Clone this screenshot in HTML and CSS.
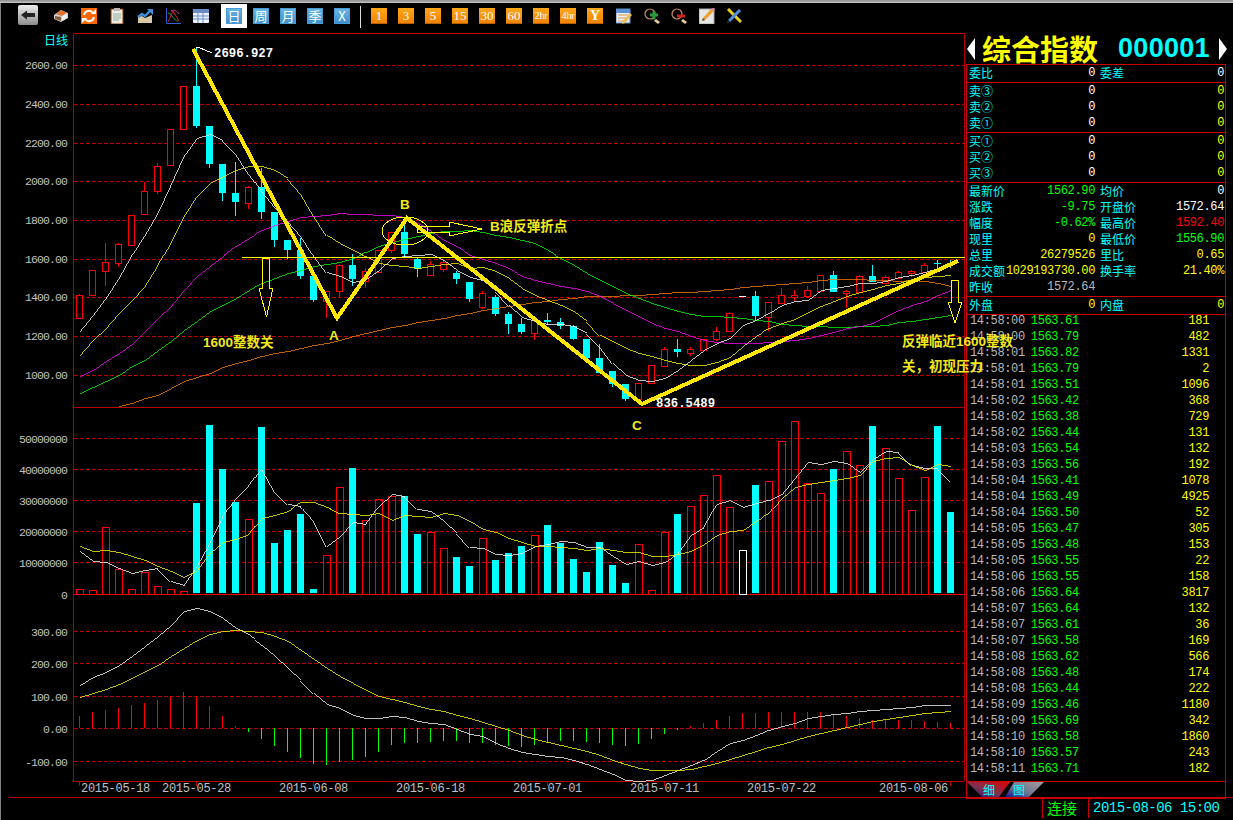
FILE: index.html
```html
<!DOCTYPE html>
<html lang="zh-CN">
<head>
<meta charset="utf-8">
<title>综合指数 000001</title>
<link rel="stylesheet" href="styles.css">
</head>
<body>
<div class="app">
  <div class="topstrip"></div>
  <nav class="toolbar">
    <svg class="icon back" viewBox="0 0 20 20"><defs><linearGradient id="gb" x1="0" y1="0" x2="0" y2="1"><stop offset="0" stop-color="#eee"/><stop offset="1" stop-color="#8c8c8c"/></linearGradient></defs><rect width="20" height="20" rx="2" fill="url(#gb)"/><path d="M3 10l6-4.500V8h8v4H9v2.500z" fill="#222"/></svg>
    <div class="group g-main">
      <svg class="icon" viewBox="0 0 16 16"><path d="M1 7l7-5 7 3v5l-7 4-7-3z" fill="#cfcfcf"/><path d="M3 6l5-4 6 3-5 3z" fill="#e8702a"/><path d="M9 8l5-3v5l-5 3z" fill="#f0f0f0"/><path d="M2 8l6 1v4l-6-2z" fill="#8a5a3a"/></svg>
      <svg class="icon" viewBox="0 0 16 16"><rect width="16" height="16" fill="#f60"/><path d="M3 7a5 5 0 0 1 9-2M13 9a5 5 0 0 1-9 2" fill="none" stroke="#fff" stroke-width="2"/><path d="M10 6h5V1zM6 10H1v5z" fill="#fff"/></svg>
      <svg class="icon" viewBox="0 0 16 16"><rect x="2" y="1" width="12" height="15" fill="#f2ece0" stroke="#7a3b10"/><rect x="5" y="0" width="6" height="3" fill="#b9b9b9"/><path d="M4 6h8M4 8h8M4 10h8M4 12h6" stroke="#8fb0a8"/></svg>
      <svg class="icon" viewBox="0 0 16 16"><path d="M1 15V9l4-1 3 2 7-3v8z" fill="#d8c8a8"/><path d="M1 9l4-3 3 2 5-5" fill="none" stroke="#3c8fd8" stroke-width="2.4"/><path d="M10 1h6v6z" fill="#3c8fd8"/></svg>
      <svg class="icon" viewBox="0 0 16 16"><path d="M1.500 0v15.500H16" fill="none" stroke="#2f5fd0"/><path d="M3 14L8 3l6 10" fill="none" stroke="#d02020"/><path d="M3 5c3 0 6 8 10 8" fill="none" stroke="#20a040"/><path d="M6 3c3-2 6 0 8 3" fill="none" stroke="#d040a0"/></svg>
      <svg class="icon" viewBox="0 0 16 16"><rect y="1" width="16" height="14" rx="1" fill="#eef2fa"/><rect y="1" width="16" height="4" fill="#6a8cc8"/><path d="M0 8h16M0 11h16M5 5v10M10 5v10" stroke="#6a8cc8"/></svg>
    </div>
    <div class="group g-period">
      <div class="btn blue active">日</div>
      <div class="btn blue">周</div>
      <div class="btn blue">月</div>
      <div class="btn blue">季</div>
      <div class="btn blue">X</div>
    </div>
    <div class="sep"></div>
    <div class="group g-period">
      <div class="btn orange">1</div>
      <div class="btn orange">3</div>
      <div class="btn orange">5</div>
      <div class="btn orange">15</div>
      <div class="btn orange">30</div>
      <div class="btn orange">60</div>
      <div class="btn orange small">2hr</div>
      <div class="btn orange small">4hr</div>
      <div class="btn orange strong">Y</div>
    </div>
    <div class="group g-tools">
      <svg class="icon" viewBox="0 0 16 16"><rect y="1" width="14" height="14" fill="#e8f0fa" stroke="#6a8cc8"/><rect y="1" width="14" height="4" fill="#5a90d8"/><path d="M2 7h10M2 10h10M2 13h6" stroke="#e09040"/><path d="M7 13l7-8 2 2-7 8-3 1z" fill="#e8c050"/></svg>
      <svg class="icon" viewBox="0 0 16 16"><circle cx="6" cy="6" r="5" fill="none" stroke="#c89060" stroke-width="1.200"/><path d="M10 13l2-2 4 3-2 2z" fill="#e8c8a0"/><path d="M6 7h8M10 3.500v8" stroke="#2a9a3a" stroke-width="3"/></svg>
      <svg class="icon" viewBox="0 0 16 16"><circle cx="6" cy="6" r="5" fill="none" stroke="#c89060" stroke-width="1.200"/><path d="M10 13l2-2 4 3-2 2z" fill="#e8c8a0"/><path d="M6 8h8" stroke="#d02020" stroke-width="3"/></svg>
      <svg class="icon" viewBox="0 0 16 16"><rect y="1" width="15" height="15" fill="#e6e6e6" stroke="#aaa"/><path d="M3 13l1-3 8-9 3 2-9 9z" fill="#e8a030"/><path d="M3 13l1-3 2 2z" fill="#553"/><path d="M12 1l3 2 1-2-2-1z" fill="#e080c0"/></svg>
      <svg class="icon" viewBox="0 0 16 16"><path d="M2 1l13 13" stroke="#e8d020" stroke-width="3"/><path d="M14 2L3 13" stroke="#4a90e0" stroke-width="3"/><path d="M1 15l2-2" stroke="#223" stroke-width="2"/></svg>
    </div>
  </nav>

  <main class="workspace">
    <svg class="chart" viewBox="0 33 966 764" width="966" height="764" shape-rendering="crispEdges">
      <g class="grid">
        <path d="M74 65.500H964M74 104.500H964M74 143.500H964M74 181.500H964M74 220.500H964M74 259.500H964M74 297.500H964M74 336.500H964M74 375.500H964"/>
        <path d="M74 438.500H964M74 469.500H964M74 500.500H964M74 531.500H964M74 562.500H964"/>
        <path d="M74 631.500H964M74 663.500H964M74 696.500H964M74 728.500H964M74 761.500H964"/>
      </g>
      <path class="frame" d="M73.500 33V781.500M73 33.500H964.500V781M73 407.500H964M73 781.500H964"/>
      <path class="frame" d="M79.500 781v5M196.500 781v5M313.500 781v5M430.500 781v5M547.500 781v5M664.500 781v5M781.500 781v5M950.500 781v5"/>
      <path class="zero" d="M73 594.500H964"/>

      <g id="volume"></g>
      <g id="macd"></g>
      <g id="candles"></g>
      <g id="lines"></g>

      <path class="trend" d="M193 49L337 318L407 218L642 404L958 261"/>
      <path class="mark" d="M242 257.500H965"/>
      <polygon class="mark" points="262.500,258.500 269.500,258.500 269.500,288 273,288 266.500,317 259,288 262.500,288"/>
      <polygon class="mark" points="951.500,280.500 958.500,280.500 958.500,302 962,302 955,323 948,302 951.500,302"/>
      <ellipse class="mark" cx="405" cy="231" rx="23" ry="14"/>
      <polygon class="mark" points="417,226 449,226 449,222 482,229 449,236 449,232 417,232"/>
      <path class="tipline" d="M196 47.500h3L212 53"/>

      <text class="label-tag" x="44" y="45">日线</text>
      <g class="axis">
        <text x="67" y="69">2600.00</text><text x="67" y="108">2400.00</text><text x="67" y="147">2200.00</text>
        <text x="67" y="185">2000.00</text><text x="67" y="224">1800.00</text><text x="67" y="263">1600.00</text>
        <text x="67" y="301">1400.00</text><text x="67" y="340">1200.00</text><text x="67" y="379">1000.00</text>
        <text x="67" y="443">50000000</text><text x="67" y="474">40000000</text><text x="67" y="505">30000000</text>
        <text x="67" y="536">20000000</text><text x="67" y="567">10000000</text><text x="67" y="599">0</text>
        <text x="67" y="636">300.00</text><text x="67" y="668">200.00</text><text x="67" y="701">100.00</text>
        <text x="67" y="733">0.00</text><text x="67" y="766">-100.00</text>
      </g>
      <g class="dates">
        <text x="81" y="792">2015-05-18</text><text x="162" y="792">2015-05-28</text><text x="279" y="792">2015-06-08</text>
        <text x="396" y="792">2015-06-18</text><text x="513" y="792">2015-07-01</text><text x="630" y="792">2015-07-11</text>
        <text x="747" y="792">2015-07-22</text><text x="879" y="792">2015-08-06</text>
      </g>
      <text class="peak" x="214" y="57">2696.927</text>
      <text class="peak" x="656" y="407">836.5489</text>
      <g class="note">
        <text x="203" y="347">1600整数关</text>
        <text x="329" y="340">A</text>
        <text x="400" y="209">B</text>
        <text x="632" y="430">C</text>
        <text x="490" y="231">B浪反弹折点</text>
        <text x="902" y="346">反弹临近1600整数</text>
        <text x="902" y="371">关，初现压力</text>
      </g>
    </svg>

    <aside class="panel">
      <header class="quote-head">
        <span class="tri tri-left"></span>
        <span class="quote-name">综合指数</span>
        <span class="quote-code">000001</span>
        <span class="tri tri-right"></span>
      </header>
      <div class="book">
        <section class="sec">
          <div class="row"><div class="half"><span class="lbl">委比</span><span class="wht">0</span></div><div class="half two"><span class="lbl">委差</span><span class="wht">0</span></div></div>
        </section>
        <section class="sec">
          <div class="row"><div class="half"><span class="lbl">卖③</span><span class="wht">0</span></div><div class="half two"><span></span><span class="yel">0</span></div></div>
          <div class="row"><div class="half"><span class="lbl">卖②</span><span class="wht">0</span></div><div class="half two"><span></span><span class="yel">0</span></div></div>
          <div class="row"><div class="half"><span class="lbl">卖①</span><span class="wht">0</span></div><div class="half two"><span></span><span class="yel">0</span></div></div>
        </section>
        <section class="sec">
          <div class="row"><div class="half"><span class="lbl">买①</span><span class="wht">0</span></div><div class="half two"><span></span><span class="yel">0</span></div></div>
          <div class="row"><div class="half"><span class="lbl">买②</span><span class="wht">0</span></div><div class="half two"><span></span><span class="yel">0</span></div></div>
          <div class="row"><div class="half"><span class="lbl">买③</span><span class="wht">0</span></div><div class="half two"><span></span><span class="yel">0</span></div></div>
        </section>
        <section class="sec">
          <div class="row"><div class="half"><span class="lbl">最新价</span><span class="grn">1562.90</span></div><div class="half two"><span class="lbl">均价</span><span class="wht">0</span></div></div>
          <div class="row"><div class="half"><span class="lbl">涨跌</span><span class="grn">-9.75</span></div><div class="half two"><span class="lbl">开盘价</span><span class="wht">1572.64</span></div></div>
          <div class="row"><div class="half"><span class="lbl">幅度</span><span class="grn">-0.62%</span></div><div class="half two"><span class="lbl">最高价</span><span class="red">1592.40</span></div></div>
          <div class="row"><div class="half"><span class="lbl">现里</span><span class="yel">0</span></div><div class="half two"><span class="lbl">最低价</span><span class="grn">1556.90</span></div></div>
          <div class="row"><div class="half"><span class="lbl">总里</span><span class="yel">26279526</span></div><div class="half two"><span class="lbl">里比</span><span class="yel">0.65</span></div></div>
          <div class="row"><div class="half"><span class="lbl">成交额</span><span class="yel">1029193730.00</span></div><div class="half two"><span class="lbl">换手率</span><span class="yel">21.40%</span></div></div>
          <div class="row"><div class="half"><span class="lbl">昨收</span><span class="gry">1572.64</span></div><div class="half two"></div></div>
        </section>
        <section class="sec">
          <div class="row"><div class="half"><span class="lbl">外盘</span><span class="yel">0</span></div><div class="half two"><span class="lbl">内盘</span><span class="yel">0</span></div></div>
        </section>
        <section class="sec ticks">
          <div class="tick"><span class="gry">14:58:00</span><span class="grn">1563.61</span><span class="vol">181</span></div>
          <div class="tick"><span class="gry">14:58:00</span><span class="grn">1563.79</span><span class="vol">482</span></div>
          <div class="tick"><span class="gry">14:58:01</span><span class="grn">1563.82</span><span class="vol">1331</span></div>
          <div class="tick"><span class="gry">14:58:01</span><span class="grn">1563.79</span><span class="vol">2</span></div>
          <div class="tick"><span class="gry">14:58:01</span><span class="grn">1563.51</span><span class="vol">1096</span></div>
          <div class="tick"><span class="gry">14:58:02</span><span class="grn">1563.42</span><span class="vol">368</span></div>
          <div class="tick"><span class="gry">14:58:02</span><span class="grn">1563.38</span><span class="vol">729</span></div>
          <div class="tick"><span class="gry">14:58:02</span><span class="grn">1563.44</span><span class="vol">131</span></div>
          <div class="tick"><span class="gry">14:58:03</span><span class="grn">1563.54</span><span class="vol">132</span></div>
          <div class="tick"><span class="gry">14:58:03</span><span class="grn">1563.56</span><span class="vol">192</span></div>
          <div class="tick"><span class="gry">14:58:04</span><span class="grn">1563.41</span><span class="vol">1078</span></div>
          <div class="tick"><span class="gry">14:58:04</span><span class="grn">1563.49</span><span class="vol">4925</span></div>
          <div class="tick"><span class="gry">14:58:04</span><span class="grn">1563.50</span><span class="vol">52</span></div>
          <div class="tick"><span class="gry">14:58:05</span><span class="grn">1563.47</span><span class="vol">305</span></div>
          <div class="tick"><span class="gry">14:58:05</span><span class="grn">1563.48</span><span class="vol">153</span></div>
          <div class="tick"><span class="gry">14:58:05</span><span class="grn">1563.55</span><span class="vol">22</span></div>
          <div class="tick"><span class="gry">14:58:06</span><span class="grn">1563.55</span><span class="vol">158</span></div>
          <div class="tick"><span class="gry">14:58:06</span><span class="grn">1563.64</span><span class="vol">3817</span></div>
          <div class="tick"><span class="gry">14:58:07</span><span class="grn">1563.64</span><span class="vol">132</span></div>
          <div class="tick"><span class="gry">14:58:07</span><span class="grn">1563.61</span><span class="vol">36</span></div>
          <div class="tick"><span class="gry">14:58:07</span><span class="grn">1563.58</span><span class="vol">169</span></div>
          <div class="tick"><span class="gry">14:58:08</span><span class="grn">1563.62</span><span class="vol">566</span></div>
          <div class="tick"><span class="gry">14:58:08</span><span class="grn">1563.48</span><span class="vol">174</span></div>
          <div class="tick"><span class="gry">14:58:08</span><span class="grn">1563.44</span><span class="vol">222</span></div>
          <div class="tick"><span class="gry">14:58:09</span><span class="grn">1563.46</span><span class="vol">1180</span></div>
          <div class="tick"><span class="gry">14:58:09</span><span class="grn">1563.69</span><span class="vol">342</span></div>
          <div class="tick"><span class="gry">14:58:10</span><span class="grn">1563.58</span><span class="vol">1860</span></div>
          <div class="tick"><span class="gry">14:58:10</span><span class="grn">1563.57</span><span class="vol">243</span></div>
          <div class="tick"><span class="gry">14:58:11</span><span class="grn">1563.71</span><span class="vol">182</span></div>
        </section>
        <div class="tabs">
          <svg class="tabs-art" viewBox="0 0 80 15" width="80" height="15">
            <defs>
              <linearGradient id="t1" x1="1" y1="0" x2="0" y2="1"><stop offset="0" stop-color="#e00000"/><stop offset=".55" stop-color="#803050"/><stop offset="1" stop-color="#101080"/></linearGradient>
              <linearGradient id="t2" x1="1" y1="0" x2="0" y2="1"><stop offset="0" stop-color="#a0a0a0"/><stop offset=".6" stop-color="#707090"/><stop offset="1" stop-color="#101090"/></linearGradient>
            </defs>
            <polygon points="0,0 43,0 32,15 15,15" fill="url(#t1)"/>
            <polygon points="38,15 47,0 77,0 62,15" fill="url(#t2)"/>
            <text class="tab-text" x="16" y="13">细</text>
            <text class="tab-text" x="46" y="13">图</text>
          </svg>
        </div>
      </div>
    </aside>
  </main>

  <footer class="status">
    <span class="conn">连接</span>
    <span class="clock">2015-08-06 15:00</span>
  </footer>
</div>
<script src="chart.js"></script>
</body>
</html>
```

FILE: styles.css
```css
* { box-sizing: border-box; }
html, body { margin: 0; padding: 0; height: 100%; background: #000; overflow: hidden; }
.app {
  width: 1233px; height: 820px; background: #000;
  box-shadow: inset 1px 0 0 #808080;
  font-family: "Liberation Mono", "Noto Sans CJK SC", monospace;
}
.topstrip { height: 3px; background: linear-gradient(#8a8a8a, #c8c8c8); }

.toolbar { height: 30px; display: flex; align-items: flex-start; padding: 5px 0 0 18px; }
.icon { width: 16px; height: 16px; display: block; flex: none; }
.back { width: 20px; height: 20px; margin-top: -3px; }
.group { display: flex; }
.g-main { gap: 12px; margin-left: 15px; }
.g-period { gap: 11px; margin-left: 17px; }
.g-tools { gap: 11.500px; margin-left: 13px; }
.sep { width: 1px; height: 22px; margin: -2px 0 0 10px; background: #ddd; }
.sep + .g-period { margin-left: 10px; }
.btn {
  width: 16px; height: 16px; display: flex; align-items: center; justify-content: center;
  color: #fff; font-size: 13px; line-height: 16px; font-family: "Noto Sans CJK SC", sans-serif;
}
.blue { background: linear-gradient(#6ab8e8, #3a8ecc); box-shadow: inset 0 0 0 1px #4a9ad4; }
.blue.active { box-shadow: inset 0 0 0 1px #4a9ad4, 0 0 0 4px #fff, -1px 0 0 4px #fff, 1px 0 0 4px #fff; }
.orange {
  background: linear-gradient(#ffa81a, #f08000); box-shadow: inset 0 -1px 0 #b86000;
  font-family: "Liberation Serif", serif; font-size: 13px;
}
.small { font-size: 10.500px; letter-spacing: -.4px; }
.strong { font-weight: 700; font-size: 14px; }

.workspace { display: flex; height: 764px; }
.chart { display: block; flex: none; overflow: visible; z-index: 1; }
.grid path { fill: none; stroke: #b80000; stroke-dasharray: 4 2; }
.frame { fill: none; stroke: #b00000; }
.zero { fill: none; stroke: #f00000; }
.trend { fill: none; stroke: #ffe600; stroke-width: 4; stroke-linejoin: miter; }
.mark { fill: none; stroke: #ff0; }
.tipline { fill: none; stroke: #fff; }
.label-tag { font: 12px "Noto Sans CJK SC", sans-serif; fill: #00ffff; }
.axis text { font: 11.500px "Liberation Mono", monospace; letter-spacing: -.9px; fill: #c0c0c0; text-anchor: end; }
.dates text { font: 12px "Liberation Mono", monospace; letter-spacing: -.3px; fill: #c0c0c0; }
.peak { font: 700 12.300px "Liberation Mono", monospace; fill: #fff; }
.note text { font: 700 13.500px "Liberation Sans", "Noto Sans CJK SC", sans-serif; fill: #f0e81c; }

.ln { fill: none; stroke-width: .75; }
.ln-white { stroke: #fff; }
.ln-yellow { stroke: #ff0; }
.ln-magenta { stroke: #f0f; }
.ln-green { stroke: #0f0; }
.ln-orange { stroke: #ff8000; }
.up { fill: #000; stroke: #f00; }
.up-hollow { fill: none; stroke: #f00; }
.flat { fill: #000; stroke: #fff; }
.down { fill: #0ff; stroke: none; }
.wick-up { stroke: #f00; fill: none; }
.wick-down { stroke: #0ff; fill: none; }
.wick-flat { stroke: #fff; fill: none; }
.stem-up { stroke: #f00; fill: none; }
.stem-down { stroke: #0f0; fill: none; }

.panel { width: 260px; flex: none; display: flex; flex-direction: column; }
.quote-head { height: 31px; display: flex; align-items: center; padding-left: 1px; }
.tri { width: 0; height: 0; border-style: solid; border-color: transparent; flex: none; }
.tri-left { border-width: 11px 8px 11px 0; border-right-color: #fff; }
.tri-right { border-width: 11px 0 11px 8px; border-left-color: #fff; margin-left: 9px; }
.quote-name { margin-left: 7px; font: 700 29px/31px "Noto Sans CJK SC", sans-serif; color: #ff0; white-space: nowrap; }
.quote-code { margin-left: 20px; font: 700 27px/31px "Liberation Sans", sans-serif; letter-spacing: .3px; color: #0ff; }

.book {
  flex: 1; display: flex; flex-direction: column;
  border: 1px solid #c80000; border-bottom-width: 2px;
  font-size: 12px; line-height: 16px; letter-spacing: -.35px;
}
.sec { border-bottom: 1px solid #c80000; flex: none; padding-bottom: 1px; }
.row { display: flex; height: 16px; }
.half { width: 128px; padding-left: 2px; display: flex; justify-content: space-between; white-space: nowrap; }
.half.two { width: 130px; padding: 0 1px 0 5px; }
.lbl { color: #0ff; font: 12px/16px "Noto Sans CJK SC", sans-serif; letter-spacing: 0; }
.wht { color: #fff; }
.yel { color: #ff0; }
.grn { color: #0f0; }
.red { color: #f00; }
.gry { color: #b8b8b8; }

.ticks { height: 467px; overflow: hidden; padding-bottom: 0; }
.tick { height: 16px; display: flex; padding-left: 3px; white-space: nowrap; position: relative; top: -2px; }
.tick .grn { margin-left: 6px; }
.tick .vol { margin-left: auto; margin-right: 16px; color: #ff0; }

.tabs { flex: 1; }
.tabs-art { display: block; overflow: visible; }
.tab-text { font: 12px "Noto Sans CJK SC", sans-serif; fill: #0ff; }

.status {
  height: 23px; margin-left: 9px; border-top: 1px solid #b00000;
  display: flex; align-items: flex-start; justify-content: flex-end;
}
.conn {
  width: 46px; height: 20px; padding-left: 4px; border-left: 1px solid #c80000;
  color: #0f0; font: 15px/19px "Noto Sans CJK SC", sans-serif;
}
.clock {
  width: 145px; height: 20px; padding-left: 4px; border-left: 1px solid #c80000;
  color: #0ff; font: 14px/20px "Liberation Mono", monospace; letter-spacing: -.5px; white-space: nowrap;
}
```

FILE: chart.js
```js
(function () {
  var NS = 'http://www.w3.org/2000/svg';
  var X = function (i) { return 79 + 13 * i; };

  function el(parent, name, attrs) {
    var n = document.createElementNS(NS, name);
    for (var k in attrs) n.setAttribute(k, attrs[k]);
    parent.appendChild(n);
    return n;
  }
  function series(base1, a, base2, b, first) {
    var ys = a.map(function (z) { return base1 + z / 3; })
      .concat(b.map(function (z) { return base2 + z / 3; }));
    return ys.map(function (y, k) { return (X(k + (first || 0)) + 0.5) + ',' + (Math.floor(y) + 0.5); }).join(' ');
  }
  function line(parent, cls, pts) { el(parent, 'polyline', { 'class': 'ln ln-' + cls, points: pts }); }

  /* candles: [kind, bodyTop, bodyBottom, wickTop, wickBottom] */
  var C = [
    ['u',295,318,294,318],['u',270,295,270,295],['u',262,271,243,286],['u',244,263,243,267],
    ['u',215,245,215,245],['u',191,214,182,214],['u',166,191,163,194],['u',129,165,129,165],
    ['u',86,129,86,129],['d',86,126,47,128],['d',126,164,126,168],['d',164,193,164,201],
    ['d',193,202,162,216],['u',187,203,186,209],['d',187,212,168,219],['d',212,240,212,247],
    ['d',240,250,240,259],['d',250,276,238,279],['d',276,300,276,302],['u',291,301,291,318],
    ['u',265,291,264,297],['d',265,279,254,286],['u',271,281,268,288],['u',250,272,250,272],
    ['u',232,250,232,253],['d',232,254,220,257],['d',259,269,258,277],['u',264,275,261,275],
    ['u',262,269,259,272],['d',273,279,271,284],['d',282,299,282,302],['u',293,307,291,309],
    ['d',297,314,295,316],['d',314,324,312,334],['d',324,332,318,334],['u',320,333,320,340],
    ['d',320,322,313,325],['d',322,326,318,329],['d',326,339,325,340],['d',339,358,339,358],
    ['d',358,373,344,373],['d',371,384,371,387],['d',384,399,384,401],['u',383,399,383,399],
    ['u',365,383,365,383],['u',349,366,347,366],['d',349,352,339,357],['u',349,353,347,356],
    ['u',339,350,339,350],['u',331,339,327,341],['u',313,331,312,331],['f',296,296,296,296],
    ['d',296,316,291,320],['u',302,317,302,331],['u',295,303,288,303],['u',295,297,290,301],
    ['u',290,296,286,296],['u',275,291,275,291],['d',275,292,271,292],['u',291,293,290,308],
    ['u',276,292,275,292],['d',276,282,265,282],['u',277,283,275,283],['u',272,278,271,278],
    ['u',271,273,270,277],['u',265,272,263,272],['d',263,264,260,268],['d',263,265,260,268]
  ];
  var gc = document.getElementById('candles');
  C.forEach(function (c, i) {
    var x = X(i), k = c[0], top = c[1], bot = c[2];
    if (k === 'f') { el(gc, 'path', { 'class': 'wick-flat', d: 'M' + (x - 3) + ' ' + (top + .5) + 'h7' }); return; }
    var wick = k === 'u' ? 'wick-up' : 'wick-down';
    if (c[3] < top) el(gc, 'path', { 'class': wick, d: 'M' + (x + .5) + ' ' + c[3] + 'V' + top });
    if (c[4] > bot) el(gc, 'path', { 'class': wick, d: 'M' + (x + .5) + ' ' + bot + 'V' + c[4] });
    if (k === 'u') el(gc, 'rect', { 'class': 'up', x: x - 2.5, y: top + .5, width: 6, height: Math.max(bot - top, 1) });
    else el(gc, 'rect', { 'class': 'down', x: x - 3, y: top, width: 7, height: Math.max(bot - top, 1) });
  });

  /* moving averages: zoomed-pixel samples on the two halves of the chart */
  var gl = document.getElementById('lines');
  line(gl, 'orange', series(140, [800,790,775,765,745,725,712,700,682,670,660,650,640,635,625,615,610,600,590,580,572,562,555,548,540,535,527,520], 200,
    [330,325,318,312,307,303,298,295,290,288,288,287,286,284,280,278,277,273,270,267,262,258,255,253,250,247,240,238,238,238,240,242,243,240,245,250,260], 3));
  line(gl, 'green', series(140, [760,743,725,705,680,660,632,605,570,545,515,495,475,450,430,415,400,390,380,372,368,355,338,320,308,298,290,280,275,275,270], 200,
    [97,105,112,122,130,150,175,197,220,240,260,280,295,310,322,335,342,348,350,353,355,360,365,372,377,378,378,381,382,380,378,375,368,365,358,352,347]));
  line(gl, 'magenta', series(140, [708,690,665,640,612,575,535,500,450,410,380,350,320,295,270,255,243,233,228,225,220,223,224,226,227,232,250,275,300,320,345], 200,
    [178,190,205,228,240,250,260,265,275,290,310,330,350,370,385,395,410,420,428,430,430,430,428,425,420,415,405,398,385,380,370,350,330,315,305,285,270]));
  line(gl, 'yellow', series(140, [647,600,565,520,480,440,375,310,230,170,130,110,90,78,78,92,115,160,225,285,310,330,350,370,375,378,385,380,372,370,385], 200,
    [203,215,235,265,285,300,315,335,365,405,425,445,460,470,480,490,495,495,488,472,440,410,385,370,358,338,318,305,290,278,268,255,250,238,232,228,225]));
  line(gl, 'white', series(140, [575,525,475,415,345,285,220,135,50,-5,-18,0,40,100,150,200,240,285,345,397,408,427,418,390,355,350,345,343,360,390,412], 200,
    [240,275,315,352,365,372,372,378,400,440,490,525,540,543,535,510,480,450,430,415,375,360,340,315,305,300,272,265,258,250,250,245,232,225,218,205,195]));

  /* volume bars */
  var V = ['u538','u541','u352','u478','u538','u487','u529','u538','u544','d279','d45','d177','d276','u328','d51','d399','d360','d312','d537','u436','u232','d174','u331','u268','u258','d258','d372','u365','u415','d441','d468','u384',
    'd450','d429','d408','u376','d345','d399','d447','d486','d396','d465','d519','u403','u541','u367','d312','u289','u256','u196','u292','f421','d225','u214','u94','u34','u220','u250','d177','u124','u166','d48','u115','u205','u301','u202','d48','d306'];
  var gv = document.getElementById('volume');
  V.forEach(function (s, i) {
    var k = s.charAt(0), top = Math.round(410 + Number(s.slice(1)) / 3), x = X(i);
    if (k === 'd') el(gv, 'rect', { 'class': 'down', x: x - 3, y: top, width: 7, height: 593 - top });
    else el(gv, 'rect', { 'class': k === 'u' ? 'up-hollow' : 'flat', x: x - 2.5, y: top + .5, width: 7, height: 594 - top });
  });
  line(gv, 'white', series(410, [424,455,458,476,491,480,475,515,526,470,400,318,265,225,175,245,283,290,335,410,380,338,343,290,253,258,298,304,335,370,412], 410,
    [415,433,435,431,410,402,394,396,412,412,440,463,455,467,458,430,375,353,282,270,292,280,271,252,205,157,163,155,160,186,148,125,128,165,176,175,215]));
  line(gv, 'yellow', series(410, [408,425,421,427,440,452,468,485,502,480,430,397,388,372,325,315,303,278,277,292,310,312,316,310,331,316,319,323,311,315,333], 410,
    [357,368,385,398,408,408,412,416,421,414,422,428,428,440,440,433,423,402,377,365,361,335,311,265,232,222,218,210,205,195,153,145,142,165,180,163,170]));

  /* MACD */
  var M = [348,336,330,323,315,309,300,289,276,289,318,348,378,
    396,417,438,456,474,492,495,486,480,471,456,435,429,429,426,423,423,429,
    429,435,438,441,435,429,423,423,426,429,435,438,432,417,402,390,
    378,369,360,348,339,339,336,336,336,336,336,342,348,354,360,360,360,360,363,366,369];
  var gm = document.getElementById('macd');
  M.forEach(function (z, i) {
    var y = Math.round(600 + z / 3), x = X(i) + .5;
    el(gm, 'path', { 'class': z > 385 ? 'stem-down' : 'stem-up', d: 'M' + x + ' 728V' + y });
  });
  line(gm, 'white', series(600, [257,233,218,197,170,140,110,75,33,24,33,55,85,103,135,170,205,240,280,314,324,345,355,355,349,352,365,370,373,387,402], 600,
    [408,430,445,457,463,469,472,482,492,507,523,540,544,540,525,510,495,480,455,430,422,405,390,378,370,355,350,342,339,333,330,328,325,321,317,316,316]));
  line(gm, 'yellow', series(600, [292,280,268,252,235,215,195,170,145,120,102,94,91,95,98,110,125,150,178,205,228,250,270,288,298,307,318,327,335,345,355], 600,
    [368,380,392,405,418,427,435,445,455,465,480,493,505,511,511,511,508,500,490,478,465,455,442,432,420,410,400,390,382,372,364,357,352,346,340,336,333]));
})();
```
